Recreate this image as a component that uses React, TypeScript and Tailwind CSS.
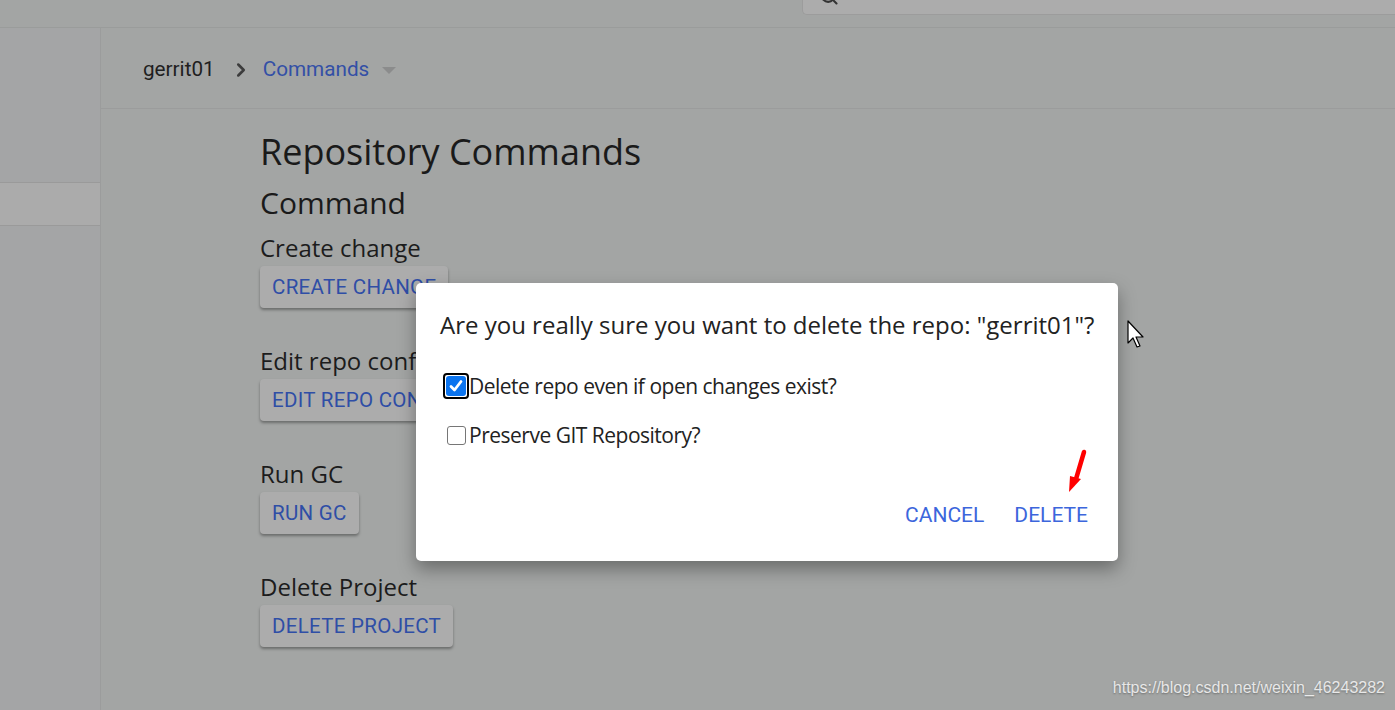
import { Search, ChevronRight } from "lucide-react";

const sections = [
  { label: "Create change", button: "CREATE CHANGE" },
  { label: "Edit repo config", button: "EDIT REPO CONFIG" },
  { label: "Run GC", button: "RUN GC" },
  { label: "Delete Project", button: "DELETE PROJECT" },
];

const CommandSection = ({ label, button }: { label: string; button: string }) => {
  return (
    <div className="mb-[39px]">
      <div className="text-[24px] leading-[28px] text-[#1c1c1c]">{label}</div>
      <button
        type="button"
        className="mt-[4px] h-[42px] px-[12px] rounded-[4px] bg-[#acacac] shadow-[0_2px_3px_rgba(0,0,0,0.35)] text-[20.5px] text-[#2f4ea6] font-['Roboto',sans-serif] tracking-[0.3px]"
      >
        {button}
      </button>
    </div>
  );
};

const Checkbox = ({ checked }: { checked: boolean }) => {
  if (checked) {
    return (
      <span className="flex items-center justify-center w-[26px] h-[26px] rounded-[4px] border-2 border-black">
        <span className="flex items-center justify-center w-[20px] h-[20px] rounded-[3px] bg-[#0b74ef]">
          <svg width="16" height="16" viewBox="0 0 16 16">
            <path d="M3 8.5 L6.5 12 L13 3.5" fill="none" stroke="white" strokeWidth="2.8" strokeLinecap="round" strokeLinejoin="round" />
          </svg>
        </span>
      </span>
    );
  }
  return (
    <span className="flex items-center justify-center w-[26px] h-[26px]">
      <span className="w-[19px] h-[19px] rounded-[3px] border border-[#767676] bg-white" />
    </span>
  );
};

export default function App() {
  return (
    <div className="relative w-[1395px] h-[710px] overflow-hidden bg-[#a3a5a4] font-['Open_Sans',sans-serif]">
      {/* header */}
      <div className="h-[28px] border-b border-[#9a9c9b] flex justify-end">
        <div className="relative w-[593px] h-[15px] bg-[#acacac] border-b border-l border-[#9c9c9c] rounded-bl-[5px] overflow-hidden">
          <Search className="absolute left-[16px] top-[-14px] text-[#333]" size={20} strokeWidth={2.5} />
        </div>
      </div>

      <div className="flex h-[682px]">
        {/* sidebar */}
        <div className="w-[101px] shrink-0 border-r border-[#9b9c9c] bg-[#a4a5a6]">
          <div className="mt-[154px] h-[44px] bg-[#ababab] border-y border-[#9a9a9a]" />
        </div>

        {/* main */}
        <div className="flex-1">
          <div className="h-[81px] pt-[4px] border-b border-[#9b9c9c] flex items-center pl-[42px] font-['Roboto',sans-serif] text-[20.7px]">
            <span className="text-[#1f1f1f]">gerrit01</span>
            <ChevronRight className="ml-[15px] text-[#3c3c3c]" size={22} strokeWidth={2.8} />
            <span className="ml-[11px] text-[#3350a6]">Commands</span>
            <span className="ml-[13px] w-0 h-0 border-l-[7px] border-r-[7px] border-t-[7px] border-l-transparent border-r-transparent border-t-[#8b8c8c]" />
          </div>

          <div className="pl-[159px] pt-[21px]">
            <h1 className="text-[36px] leading-[44px] text-[#1a1a1a]">Repository Commands</h1>
            <h2 className="mt-[11px] text-[30px] leading-[36px] text-[#1a1a1a]">Command</h2>
            <div className="mt-[13px]">
              {sections.map((s) => (
                <CommandSection key={s.label} label={s.label} button={s.button} />
              ))}
            </div>
          </div>
        </div>
      </div>

      {/* dialog */}
      <div className="absolute left-[416px] top-[283px] w-[702px] h-[278px] bg-white rounded-[5px] shadow-[0_8px_18px_rgba(0,0,0,0.35)] flex flex-col">
        <div className="pl-[24px] pt-[25px] text-[24px] leading-[34px] text-[#222]">
          Are you really sure you want to delete the repo: "gerrit01"?
        </div>
        <div className="mt-[31px] pl-[27px] flex flex-col gap-[23px]">
          <label className="flex items-center text-[21px] leading-[26px] text-[#222] tracking-[-0.5px]">
            <Checkbox checked />
            <span>Delete repo even if open changes exist?</span>
          </label>
          <label className="flex items-center text-[21px] leading-[26px] text-[#222] tracking-[-0.5px]">
            <Checkbox checked={false} />
            <span>Preserve GIT Repository?</span>
          </label>
        </div>
        <div className="mt-auto mb-[32px] pr-[15px] flex justify-end font-['Roboto',sans-serif] text-[21px] text-[#3c66dc]">
          <button type="button" className="px-[15px] leading-[28px]">CANCEL</button>
          <button type="button" className="px-[15px] leading-[28px]">DELETE</button>
        </div>
        <svg className="absolute left-[648px] top-[166px]" width="24" height="46" viewBox="0 0 24 46">
          <path d="M20 3 L12 30" stroke="#ff0000" strokeWidth="4.5" strokeLinecap="round" fill="none" />
          <path d="M6 27 L17 30 L5 43 Z" fill="#ff0000" />
        </svg>
      </div>

      {/* mouse cursor */}
      <svg className="absolute left-[1127px] top-[320px]" width="20" height="30" viewBox="0 0 20 30">
        <path d="M1 1 L1 23 L6 18 L10 27 L13 26 L9 17 L16 17 Z" fill="white" stroke="black" strokeWidth="1.2" strokeLinejoin="round" />
      </svg>

      {/* watermark */}
      <div className="absolute right-[10px] bottom-[10px] font-['Liberation_Sans',sans-serif] text-[16px] text-white/80 [text-shadow:0_1px_2px_rgba(0,0,0,0.35)]">
        https://blog.csdn.net/weixin_46243282
      </div>
    </div>
  );
}
